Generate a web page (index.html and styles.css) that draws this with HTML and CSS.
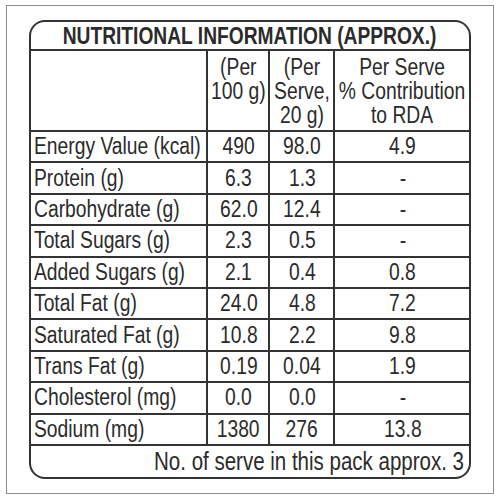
FILE: index.html
```html
<!DOCTYPE html>
<html lang="en">
<head>
    <meta charset="UTF-8">
    <meta name="viewport" content="width=device-width, initial-scale=1.0">
    <title>Nutritional Information</title>
    <link rel="stylesheet" href="styles.css">
</head>
<body>
    <!-- outer frame of the label -->
    <div class="frame">
        <div class="nutri-table">
            <div class="cell title"><span class="t">NUTRITIONAL INFORMATION (APPROX.)</span></div>

            <!-- column heads -->
            <div class="cell head"></div>
            <div class="cell head"><span class="t">(Per<br>100 g)</span></div>
            <div class="cell head"><span class="t">(Per<br>Serve,<br>20 g)</span></div>
            <div class="cell head"><span class="t">Per Serve<br>% Contribution<br>to RDA</span></div>

            <div class="cell label"><span class="t">Energy Value (kcal)</span></div>
            <div class="cell val"><span class="t">490</span></div>
            <div class="cell val"><span class="t">98.0</span></div>
            <div class="cell val"><span class="t">4.9</span></div>

            <div class="cell label"><span class="t">Protein (g)</span></div>
            <div class="cell val"><span class="t">6.3</span></div>
            <div class="cell val"><span class="t">1.3</span></div>
            <div class="cell val"><span class="t">-</span></div>

            <div class="cell label"><span class="t">Carbohydrate (g)</span></div>
            <div class="cell val"><span class="t">62.0</span></div>
            <div class="cell val"><span class="t">12.4</span></div>
            <div class="cell val"><span class="t">-</span></div>

            <div class="cell label"><span class="t">Total Sugars (g)</span></div>
            <div class="cell val"><span class="t">2.3</span></div>
            <div class="cell val"><span class="t">0.5</span></div>
            <div class="cell val"><span class="t">-</span></div>

            <div class="cell label"><span class="t">Added Sugars (g)</span></div>
            <div class="cell val"><span class="t">2.1</span></div>
            <div class="cell val"><span class="t">0.4</span></div>
            <div class="cell val"><span class="t">0.8</span></div>

            <div class="cell label"><span class="t">Total Fat (g)</span></div>
            <div class="cell val"><span class="t">24.0</span></div>
            <div class="cell val"><span class="t">4.8</span></div>
            <div class="cell val"><span class="t">7.2</span></div>

            <div class="cell label"><span class="t">Saturated Fat (g)</span></div>
            <div class="cell val"><span class="t">10.8</span></div>
            <div class="cell val"><span class="t">2.2</span></div>
            <div class="cell val"><span class="t">9.8</span></div>

            <div class="cell label"><span class="t">Trans Fat (g)</span></div>
            <div class="cell val"><span class="t">0.19</span></div>
            <div class="cell val"><span class="t">0.04</span></div>
            <div class="cell val"><span class="t">1.9</span></div>

            <div class="cell label"><span class="t">Cholesterol (mg)</span></div>
            <div class="cell val"><span class="t">0.0</span></div>
            <div class="cell val"><span class="t">0.0</span></div>
            <div class="cell val"><span class="t">-</span></div>

            <div class="cell label"><span class="t">Sodium (mg)</span></div>
            <div class="cell val"><span class="t">1380</span></div>
            <div class="cell val"><span class="t">276</span></div>
            <div class="cell val"><span class="t">13.8</span></div>

            <div class="cell foot"><span class="t">No. of serve in this pack approx. 3</span></div>
        </div>
    </div>
</body>
</html>
```

FILE: styles.css
```css
/* base */
* {
    margin: 0;
    padding: 0;
    box-sizing: border-box;
}

body {
    background: #fff;
    font-family: 'Liberation Sans', Arial, sans-serif;
    color: #2b2b2b;
}

/* grey outer frame */
.frame {
    width: 488px;
    height: 489px;
    margin: 5px 0 0 6px;
    border: 1px solid #8e8e8e;
    padding: 14px 21px 13px 22px;
}

/* the rounded table, lines are the grid gaps */
.nutri-table {
    width: 442px;
    display: grid;
    grid-template-columns: 175px 60px 63px 134px;
    grid-template-rows: 27px 79px repeat(10, 29.4px) 31px;
    gap: 2px;
    background: #333;
    border: 2px solid #333;
    border-radius: 16px;
    overflow: hidden;
}

.cell {
    background: #fff;
    font-size: 23.5px;
    display: flex;
    align-items: center;
    justify-content: center;
    text-align: center;
    white-space: nowrap;
}

/* condensed type: the label uses a narrow grotesque */
.t {
    display: inline-block;
    flex-shrink: 0;
    transform: scaleX(0.82);
}

.title {
    grid-column: 1 / -1;
    font-weight: bold;
    font-size: 24px;
    padding-top: 1px;
}

.title .t {
    transform: scaleX(0.8);
}

.head {
    align-items: flex-start;
    line-height: 24px;
    padding-top: 4px;
}

.label {
    justify-content: flex-start;
    padding-left: 3px;
}

.label .t {
    transform-origin: left center;
}

.val {
    padding-left: 1px;
}

.foot {
    grid-column: 1 / -1;
    justify-content: flex-end;
    padding-right: 5px;
    font-size: 25px;
}

.foot .t {
    transform-origin: right center;
}
```
